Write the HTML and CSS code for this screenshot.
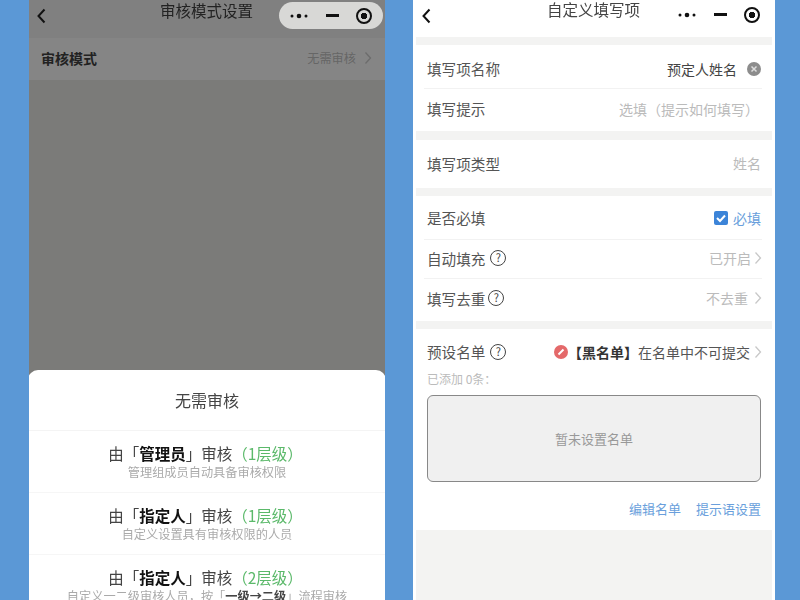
FILE: index.html
```html
<!DOCTYPE html>
<html lang="zh-CN">
<head>
<meta charset="utf-8">
<title>审核模式设置</title>
<link rel="stylesheet" href="styles.css">
</head>
<body>
<main class="stage">
  <section class="phone phone-left">
    <header class="nav nav-left">
      <svg class="back" viewBox="0 0 12 18"><path d="M9.5 2.5 3.5 9l6 6.5"/></svg>
      <h1 class="nav-title">审核模式设置</h1>
      <div class="capsule">
        <svg class="cap-dots" viewBox="0 0 18 6"><circle cx="2" cy="3" r="1.5"/><circle cx="9" cy="3" r="2.3"/><circle cx="16" cy="3" r="1.5"/></svg>
        <span class="cap-minus"></span>
        <span class="cap-target"></span>
      </div>
    </header>
    <div class="mode-row">
      <span class="mode-label">审核模式</span>
      <span class="mode-value">无需审核<svg class="chev chev-dim" viewBox="0 0 8 14"><path d="M1.5 1.5 6.5 7l-5 5.500"/></svg></span>
    </div>
    <div class="sheet">
      <div class="sheet-head">无需审核</div>
      <div class="option">
        <div class="opt-title">由「<b>管理员</b>」审核<span class="lvl">（1层级）</span></div>
        <div class="opt-sub">管理组成员自动具备审核权限</div>
      </div>
      <div class="option">
        <div class="opt-title">由「<b>指定人</b>」审核<span class="lvl">（1层级）</span></div>
        <div class="opt-sub">自定义设置具有审核权限的人员</div>
      </div>
      <div class="option">
        <div class="opt-title">由「<b>指定人</b>」审核<span class="lvl">（2层级）</span></div>
        <div class="opt-sub">自定义一二级审核人员，按「<b>一级→二级</b>」流程审核</div>
      </div>
    </div>
  </section>

  <section class="phone phone-right">
    <header class="nav nav-right">
      <svg class="back" viewBox="0 0 12 18"><path d="M9.5 2.500 3.500 9l6 6.500"/></svg>
      <h1 class="nav-title title-right">自定义填写项</h1>
      <div class="capsule capsule-plain">
        <svg class="cap-dots" viewBox="0 0 18 6"><circle cx="2" cy="3" r="1.5"/><circle cx="9" cy="3" r="2.300"/><circle cx="16" cy="3" r="1.500"/></svg>
        <span class="cap-minus"></span>
        <span class="cap-target"></span>
      </div>
    </header>
    <div class="body">
      <div class="group g1">
        <div class="row r-name line"><span class="lab">填写项名称</span><span class="val dark">预定人姓名<svg class="clear" viewBox="0 0 14 14"><circle cx="7" cy="7" r="7"/><path d="M4.500 4.500l5 5m0-5-5 5"/></svg></span></div>
        <div class="row r-hint"><span class="lab">填写提示</span><span class="val hint">选填（提示如何填写）</span></div>
      </div>
      <div class="group g2">
        <div class="row r-type"><span class="lab">填写项类型</span><span class="val">姓名</span></div>
      </div>
      <div class="group g3">
        <div class="row r-req line"><span class="lab">是否必填</span><span class="val blue"><svg class="check" viewBox="0 0 14 14"><rect width="14" height="14" rx="2"/><path d="M3 7l3 3 5-5.500"/></svg>必填</span></div>
        <div class="row r-auto line"><span class="lab">自动填充<span class="q">?</span></span><span class="val has-chev">已开启<svg class="chev" viewBox="0 0 8 14"><path d="M1.500 1.500 6.500 7l-5 5.500"/></svg></span></div>
        <div class="row r-dedupe"><span class="lab">填写去重<span class="q q-near">?</span></span><span class="val has-chev">不去重<svg class="chev chev-wide" viewBox="0 0 8 14"><path d="M1.500 1.500 6.500 7l-5 5.500"/></svg></span></div>
      </div>
      <div class="group g4">
        <div class="row preset"><span class="lab">预设名单<span class="q">?</span></span><span class="val black-rule has-chev"><svg class="ban" viewBox="0 0 14 14"><circle cx="7" cy="7" r="7"/><path d="M4.500 9.500l5-5"/></svg><b>【黑名单】</b>在名单中不可提交<svg class="chev chev-tight" viewBox="0 0 8 14"><path d="M1.500 1.500 6.500 7l-5 5.500"/></svg></span></div>
        <div class="added">已添加 0条：</div>
        <div class="empty">暂未设置名单</div>
        <div class="links"><span>编辑名单</span><span>提示语设置</span></div>
      </div>
    </div>
  </section>
</main>
</body>
</html>
```

FILE: styles.css
```css
* { box-sizing: border-box; }
html, body { margin: 0; height: 100%; }
body {
  background: #5b98d6;
  font-family: "Noto Sans CJK SC", "Liberation Sans", sans-serif;
  overflow: hidden;
}
.stage { display: flex; gap: 28px; height: 600px; padding-left: 29px; filter: blur(0.55px); }
.phone { height: 600px; display: flex; flex-direction: column; overflow: hidden; }
.phone-left { width: 356px; background: #7b7b79; position: relative; }
.phone-right { width: 362px; background: #fff; padding: 0 3px; }

.nav { display: flex; align-items: flex-start; position: relative; flex: none; }
.nav-left { height: 38px; background: #808080; padding: 7px 0 0 6px; }
.nav-right { height: 37px; margin: 0 -3px; padding: 7px 0 0 7px; }
.back { width: 12px; height: 18px; flex: none; fill: none; stroke: #111; stroke-width: 2; }
.nav-title { margin: 0; font-size: 15.500px; font-weight: 400; line-height: 20px; color: #222; position: absolute; top: 0; left: 131px; }
.title-right { left: 134px; top: -1px; color: #444; }

.capsule {
  position: absolute; top: 2px; right: 2px; width: 104px; height: 27px;
  border-radius: 14px; background: #d8d8d6;
  display: flex; align-items: center; padding-left: 11px;
}
.capsule-plain { background: none; top: 1px; right: 16px; width: 92px; padding-left: 11px; }
.cap-dots { width: 18px; height: 6px; fill: #111; flex: none; }
.cap-minus { width: 13px; height: 2.500px; background: #111; margin-left: 18px; flex: none; }
.cap-target {
  width: 16px; height: 16px; border: 2px solid #111; border-radius: 50%; margin-left: 17px; flex: none;
  background: radial-gradient(circle, #111 0 3px, transparent 3.500px);
}

.mode-row {
  height: 42px; background: #858585; flex: none;
  display: flex; align-items: center; justify-content: space-between;
  padding: 0 13px 2px 12px;
}
.mode-label { font-size: 14px; font-weight: 700; color: #222; }
.mode-value { font-size: 12.200px; color: #666; display: flex; align-items: center; gap: 8px; }

.chev { width: 8px; height: 14px; fill: none; stroke: #c8c8c8; stroke-width: 1.300; margin-left: 3px; flex: none; }
.chev-dim { stroke: #6c6c6c; margin-left: 0; }
.chev-wide { margin-left: 6px; }
.chev-tight { margin-left: 4px; }

.sheet {
  position: absolute; left: -1px; right: -1px; top: 370px; bottom: 0;
  background: #fff; border-radius: 10px 10px 0 0;
}
.sheet-head { height: 61px; text-align: center; line-height: 60px; font-size: 16px; color: #444; border-bottom: 1px solid #f4f4f4; }
.option { height: 62px; border-bottom: 1px solid #f6f6f6; text-align: center; padding-top: 12px; }
.opt-title { font-size: 15.500px; line-height: 20px; color: #444; padding-right: 3px; }
.opt-title b { color: #111; }
.lvl { color: #5bb96a; font-family: "Noto Sans CJK SC", "Liberation Serif", serif; }
.opt-sub { font-size: 12.200px; line-height: 15px; margin-top: 2px; color: #aaa; }
.opt-sub b { color: #444; }

.body { flex: 1; background: #f3f3f2; display: flex; flex-direction: column; gap: 8px; padding-top: 8px; }
.group { background: #fff; padding: 0 13px 0 11px; margin: 0 -3px; }
.g2 { margin-top: 1px; }
.g4 { flex: none; }
.row { display: flex; align-items: center; justify-content: space-between; padding-left: 3px; }
.r-name { height: 44px; padding-top: 4px; }
.r-hint { height: 42px; padding-bottom: 3px; }
.r-type { height: 48px; padding-bottom: 2px; }
.r-req { height: 44px; }
.r-auto { height: 39px; padding-bottom: 2px; }
.r-dedupe { height: 42px; padding-bottom: 4px; }
.line { border-bottom: 1px solid #f2f2f2; }
.lab { font-size: 14.600px; color: #555; display: flex; align-items: center; }
.val { font-size: 14px; color: #bbb; display: flex; align-items: center; padding-right: 1px; }
.has-chev { padding-right: 0; }
.dark { color: #444; padding-right: 0; }
.hint { padding-right: 3px; }
.blue { color: #6a9fdc; }
.clear { width: 14px; height: 14px; margin-left: 10px; fill: #8c8c8c; stroke: none; margin-right: 1px; }
.clear path { stroke: #ddd; stroke-width: 1.500; fill: none; }
.check { width: 14px; height: 14px; margin-right: 5px; margin-left: -1px; fill: #3c84d8; }
.check path { fill: none; stroke: #fff; stroke-width: 2; }
.q {
  width: 16px; height: 16px; border: 1.300px solid #444; border-radius: 50%;
  margin-left: 5px; font-size: 11px; line-height: 13px; text-align: center; color: #444; flex: none;
}
.q-near { margin-left: 3px; }
.preset { height: 48px; padding-bottom: 3px; }
.ban { width: 14px; height: 14px; fill: #e4696a; }
.ban path { stroke: #fff; stroke-width: 2; fill: none; }
.black-rule { color: #555; }
.black-rule b { color: #333; }
.added { font-size: 12px; line-height: 14px; color: #bbb; padding-left: 3px; margin-top: -5px; }
.empty {
  height: 87px; margin: 9px 1px 0 3px; border: 1.500px solid #888; border-radius: 6px; background: #f0f0f0;
  display: flex; align-items: center; justify-content: center; font-size: 13px; color: #999;
}
.links { height: 48px; display: flex; justify-content: flex-end; align-items: center; gap: 15px; font-size: 13px; color: #6a9fdc; padding: 4px 1px 0 0; }
```
